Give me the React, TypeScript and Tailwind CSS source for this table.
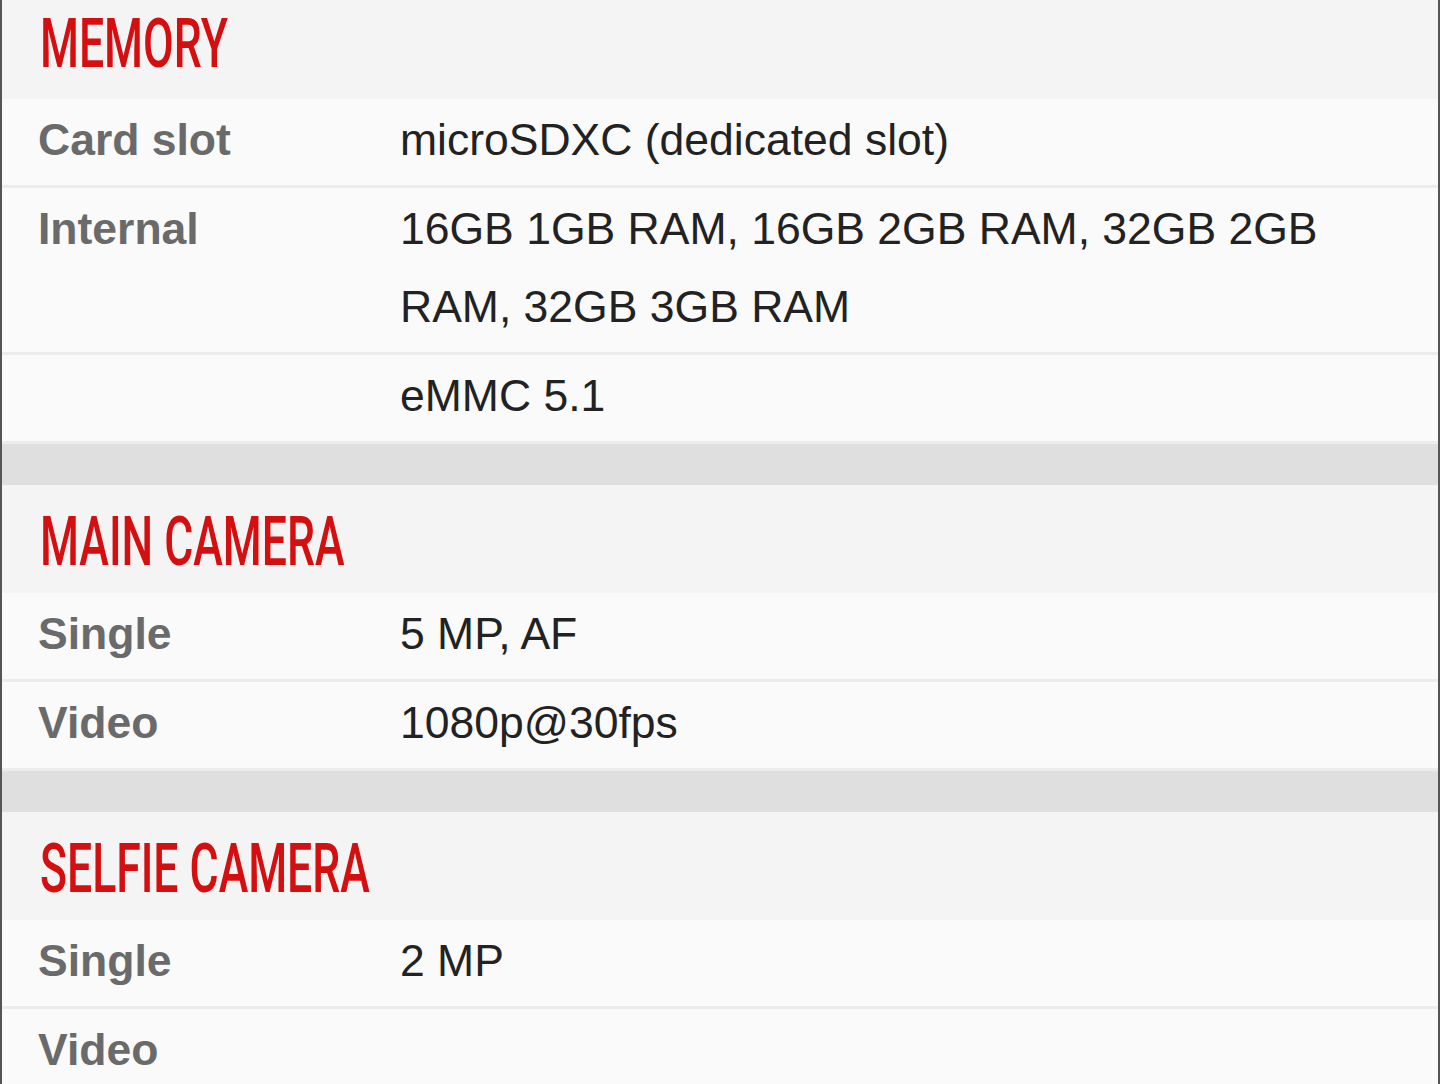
import React from "react";

type Row = { label: string; value: string };
type Section = { title: string; rows: Row[]; cropTop?: boolean };

const sections: Section[] = [
	{
		title: "MEMORY",
		cropTop: true,
		rows: [
			{ label: "Card slot", value: "microSDXC (dedicated slot)" },
			{
				label: "Internal",
				value: "16GB 1GB RAM, 16GB 2GB RAM, 32GB 2GB RAM, 32GB 3GB RAM",
			},
			{ label: "", value: "eMMC 5.1" },
		],
	},
	{
		title: "MAIN CAMERA",
		rows: [
			{ label: "Single", value: "5 MP, AF" },
			{ label: "Video", value: "1080p@30fps" },
		],
	},
	{
		title: "SELFIE CAMERA",
		rows: [
			{ label: "Single", value: "2 MP" },
			{ label: "Video", value: "" },
		],
	},
];

function SpecRow({ row, last }: { row: Row; last: boolean }) {
	return (
		<div
			className={`flex bg-[#fafafa] pt-[2px] pb-[6px] ${last ? "" : "border-b-[3px] border-[#ececec]"}`}
		>
			<div className="w-[398px] shrink-0 pl-[36px] font-bold text-[44.5px] leading-[78px] text-[#6a6a6a]">
				{row.label}
			</div>
			<div className="w-[1000px] text-[44.5px] leading-[78px] text-[#222222]">
				{row.value}
			</div>
		</div>
	);
}

function SpecSection({ section }: { section: Section }) {
	return (
		<div>
			<div
				className={`bg-[#f4f4f4] pl-[38px] ${section.cropTop ? "h-[99px] pt-0" : "h-[108px] pt-[9px]"} flex items-center`}
			>
				<span
					className={`inline-block origin-left scale-x-[0.655] font-['Roboto',sans-serif] font-medium text-[68px] leading-none text-[#d50f0f] ${section.cropTop ? "-mt-[12px]" : "-mt-[3px]"}`}
				>
					{section.title}
				</span>
			</div>
			{section.rows.map((row, i) => (
				<SpecRow key={i} row={row} last={i === section.rows.length - 1} />
			))}
		</div>
	);
}

export default function App() {
	return (
		<div className="h-[1084px] w-[1440px] overflow-hidden bg-[#fafafa] font-['Liberation_Sans',Arial,sans-serif] border-x-2 border-[#555555]">
			{sections.map((s, i) => (
				<div key={s.title}>
					{i > 0 && (
						<div className="h-[44px] border-t-[3px] border-[#ececec] bg-[#dfdfdf]" />
					)}
					<SpecSection section={s} />
				</div>
			))}
		</div>
	);
}
